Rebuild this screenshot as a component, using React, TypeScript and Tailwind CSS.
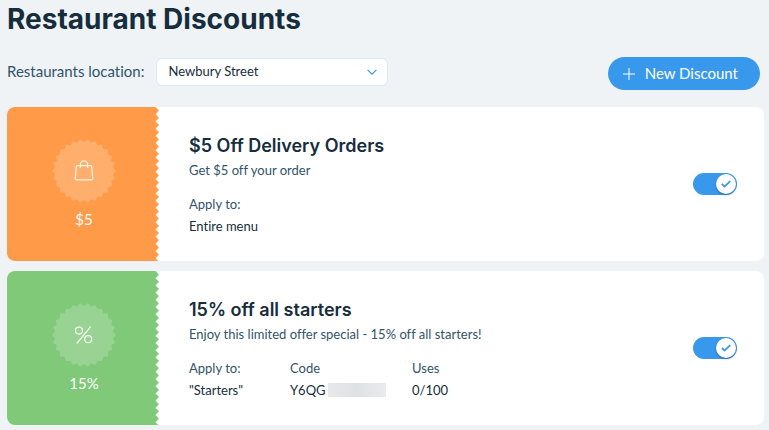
import { useState } from "react";

type Discount = {
  id: number;
  title: string;
  description: string;
  amount: string;
  kind: "fixed" | "percent";
  appliesTo: string;
  code?: string;
  uses?: string;
};

const discounts: Discount[] = [
  {
    id: 1,
    title: "$5 Off Delivery Orders",
    description: "Get $5 off your order",
    amount: "$5",
    kind: "fixed",
    appliesTo: "Entire menu",
  },
  {
    id: 2,
    title: "15% off all starters",
    description: "Enjoy this limited offer special - 15% off all starters!",
    amount: "15%",
    kind: "percent",
    appliesTo: '"Starters"',
    code: "Y6QG",
    uses: "0/100",
  },
];

// star-shaped seal, 26 teeth
const sealPoints = Array.from({ length: 52 }, (_, i) => {
  const r = i % 2 === 0 ? 32 : 29;
  const a = (i * Math.PI) / 26;
  return `${(32 + r * Math.cos(a)).toFixed(2)},${(32 + r * Math.sin(a)).toFixed(2)}`;
}).join(" ");

function Seal({ kind }: { kind: Discount["kind"] }) {
  return (
    <svg viewBox="0 0 64 64" className="size-16" fill="none" aria-hidden="true">
      <polygon points={sealPoints} fill="white" fillOpacity="0.2" />
      {kind === "fixed" ? (
        <g stroke="white" strokeOpacity="0.85" strokeWidth="1.2" strokeLinejoin="round" strokeLinecap="round">
          <path d="M25.2 26.6h13.6a.8.8 0 0 1 .8.7l1.2 12a1.3 1.3 0 0 1-1.3 1.5H24.5a1.3 1.3 0 0 1-1.3-1.5l1.2-12a.8.8 0 0 1 .8-.7z" />
          <path d="M28.4 28.4v-3a3.6 3.6 0 0 1 7.2 0v3" />
        </g>
      ) : (
        <g stroke="white" strokeOpacity="0.9" strokeWidth="1.2" strokeLinecap="round">
          <path d="M38.4 23.8 25.2 40" />
          <circle cx="27" cy="27.6" r="3.5" />
          <circle cx="36.2" cy="36.2" r="3.5" />
        </g>
      )}
    </svg>
  );
}

// perforated right edge of the coupon
function TornEdge({ id }: { id: string }) {
  return (
    <svg className="h-full w-1 shrink-0" aria-hidden="true">
      <defs>
        <pattern id={id} width="4" height="7.2" patternUnits="userSpaceOnUse">
          <path d="M0 0h.5L4 3.6.5 7.2H0z" fill="currentColor" />
        </pattern>
      </defs>
      <rect width="4" height="100%" fill={`url(#${id})`} />
    </svg>
  );
}

function Toggle({ label }: { label: string }) {
  const [on, setOn] = useState(true);
  return (
    <label className="relative flex shrink-0 cursor-pointer">
      <input
        type="checkbox"
        className="peer h-[22px] w-11 appearance-none rounded-full bg-[#b6c1cd] checked:bg-[#3899ec]"
        aria-label={label}
        checked={on}
        onChange={(e) => setOn(e.target.checked)}
      />
      <span className="pointer-events-none absolute top-px left-px flex size-5 items-center justify-center rounded-full bg-white text-[#3899ec] shadow-[0_1px_2px_rgba(22,45,61,0.5)] peer-checked:left-[23px]">
        {on && (
          <svg viewBox="0 0 10 8" className="h-2 w-2.5" fill="none" stroke="currentColor" strokeWidth="1.8" aria-hidden="true">
            <path d="M.8 4 3.6 6.6 9.2 1.2" />
          </svg>
        )}
      </span>
    </label>
  );
}

function DiscountCard({ discount }: { discount: Discount }) {
  const color =
    discount.kind === "fixed"
      ? { bg: "bg-[#ff9a48]", text: "text-[#ff9a48]" }
      : { bg: "bg-[#80c979]", text: "text-[#80c979]" };

  return (
    <li className="flex items-stretch overflow-hidden rounded-lg bg-white">
      <div className={`flex w-[148px] shrink-0 flex-col items-center pt-8 pl-1.5 text-white ${color.bg}`}>
        <Seal kind={discount.kind} />
        <div className="mt-1.5 text-[15px] leading-5">{discount.amount}</div>
      </div>
      <div className={`flex ${color.text}`}>
        <TornEdge id={`edge-${discount.id}`} />
      </div>

      <div className="flex grow items-center justify-between pr-[27px] pl-[30px]">
        <div className="pt-[25px] pb-6">
          <h2 className="font-['Inter',sans-serif] text-lg leading-7 font-semibold">{discount.title}</h2>
          <p className="text-[13px] leading-5 text-[#32536a]">{discount.description}</p>
          <dl className="mt-[13px] flex text-[13px] leading-[22px]">
            <div className="min-w-[101px]">
              <dt className="text-[#32536a]">Apply to:</dt>
              <dd>{discount.appliesTo}</dd>
            </div>
            {discount.code && (
              <div className="min-w-[122px]">
                <dt className="text-[#32536a]">Code</dt>
                <dd className="flex items-center">
                  {discount.code}
                  <span className="ml-0.5 h-3.5 w-[58px] bg-linear-to-r from-[#e6e8ea] via-[#dfe2e5] to-[#e9ebed]" />
                </dd>
              </div>
            )}
            {discount.uses && (
              <div>
                <dt className="text-[#32536a]">Uses</dt>
                <dd>{discount.uses}</dd>
              </div>
            )}
          </dl>
        </div>
        <Toggle label={`${discount.title} active`} />
      </div>
    </li>
  );
}

export default function App() {
  return (
    <main className="min-h-screen bg-[#eff3f6] pr-[5px] pb-[5px] pl-[7px] font-['Lato',sans-serif] text-[#162d3d] [font-variant-ligatures:none]">
      <h1 className="font-['Inter',sans-serif] text-[28px] leading-[38px] font-bold">Restaurant Discounts</h1>

      <div className="mt-[19px] mb-[17px] flex items-center justify-between pr-1">
        <div className="flex items-center gap-3 pb-1">
          <label htmlFor="location" className="text-[15px] text-[#32536a]">
            Restaurants location:
          </label>
          <div className="relative flex h-7 w-[232px]">
            <select
              id="location"
              className="w-full appearance-none rounded-md border border-[#d6e9fb] bg-white pl-[11px] text-[13px]"
            >
              <option>Newbury Street</option>
            </select>
            <svg
              viewBox="0 0 10 6"
              className="pointer-events-none absolute top-[11px] right-[11px] h-1.5 w-2.5"
              fill="none"
              stroke="#3899ec"
              strokeWidth="1.2"
              aria-hidden="true"
            >
              <path d="M.6.8 5 5.2 9.4.8" />
            </svg>
          </div>
        </div>
        <button type="button" className="flex h-[33px] items-center gap-2.5 rounded-full bg-[#3899ec] pr-[22px] pl-[15px] text-[15px] text-white">
          <svg viewBox="0 0 12 12" className="size-3" stroke="currentColor" aria-hidden="true">
            <path d="M6 0v12M0 6h12" />
          </svg>
          New Discount
        </button>
      </div>

      <ul className="flex flex-col gap-2.5">
        {discounts.map((d) => (
          <DiscountCard key={d.id} discount={d} />
        ))}
      </ul>
    </main>
  );
}
